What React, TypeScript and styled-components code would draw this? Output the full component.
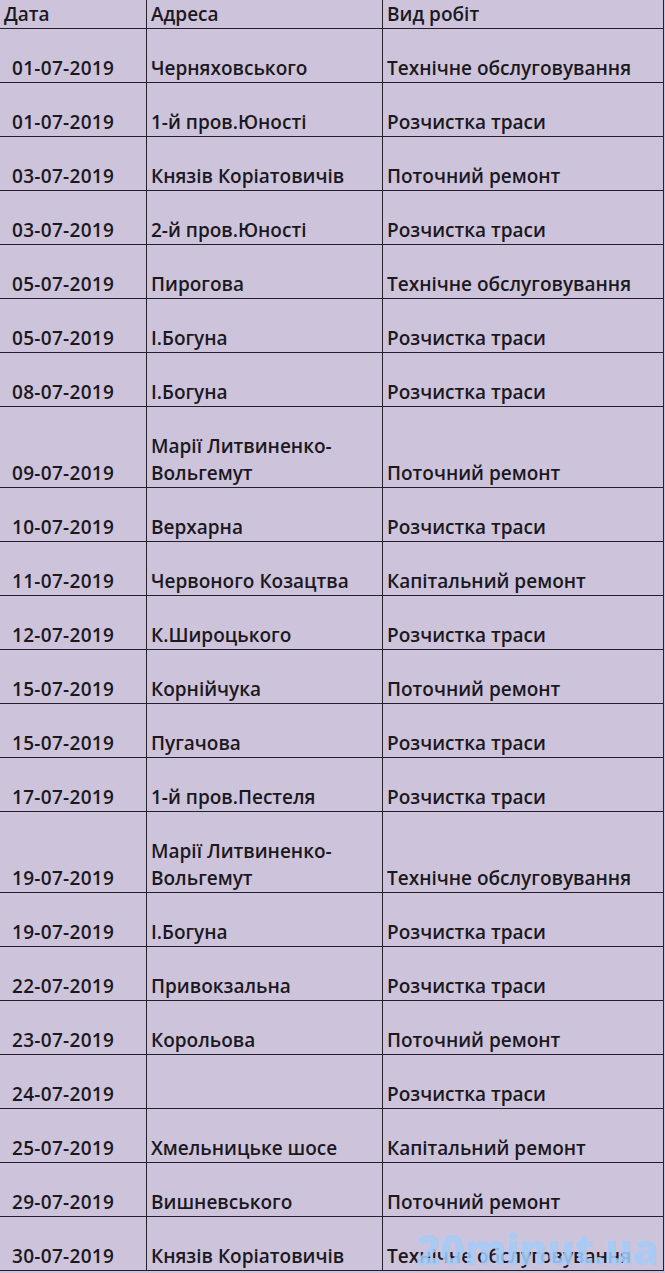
import React from 'react';
import styled, { createGlobalStyle } from 'styled-components';

type Row = {
  date: string;
  address: string;
  work: string;
  tall?: boolean;
};

const rows: Row[] = [
  { date: '01-07-2019', address: 'Черняховського', work: 'Технічне обслуговування' },
  { date: '01-07-2019', address: '1-й пров.Юності', work: 'Розчистка траси' },
  { date: '03-07-2019', address: 'Князів Коріатовичів', work: 'Поточний ремонт' },
  { date: '03-07-2019', address: '2-й пров.Юності', work: 'Розчистка траси' },
  { date: '05-07-2019', address: 'Пирогова', work: 'Технічне обслуговування' },
  { date: '05-07-2019', address: 'І.Богуна', work: 'Розчистка траси' },
  { date: '08-07-2019', address: 'І.Богуна', work: 'Розчистка траси' },
  { date: '09-07-2019', address: 'Марії Литвиненко-Вольгемут', work: 'Поточний ремонт', tall: true },
  { date: '10-07-2019', address: 'Верхарна', work: 'Розчистка траси' },
  { date: '11-07-2019', address: 'Червоного Козацтва', work: 'Капітальний ремонт' },
  { date: '12-07-2019', address: 'К.Широцького', work: 'Розчистка траси' },
  { date: '15-07-2019', address: 'Корнійчука', work: 'Поточний ремонт' },
  { date: '15-07-2019', address: 'Пугачова', work: 'Розчистка траси' },
  { date: '17-07-2019', address: '1-й пров.Пестеля', work: 'Розчистка траси' },
  { date: '19-07-2019', address: 'Марії Литвиненко-Вольгемут', work: 'Технічне обслуговування', tall: true },
  { date: '19-07-2019', address: 'І.Богуна', work: 'Розчистка траси' },
  { date: '22-07-2019', address: 'Привокзальна', work: 'Розчистка траси' },
  { date: '23-07-2019', address: 'Корольова', work: 'Поточний ремонт' },
  { date: '24-07-2019', address: '', work: 'Розчистка траси' },
  { date: '25-07-2019', address: 'Хмельницьке шосе', work: 'Капітальний ремонт' },
  { date: '29-07-2019', address: 'Вишневського', work: 'Поточний ремонт' },
  { date: '30-07-2019', address: 'Князів Коріатовичів', work: 'Технічне обслуговування' },
];

const GlobalStyle = createGlobalStyle`
  html, body {
    margin: 0;
    padding: 0;
    background: #cdc4dc;
  }
  body {
    font-family: 'Open Sans', 'Noto Sans', sans-serif;
    color: #1b1820;
  }
`;

const Page = styled.div`
  position: relative;
  width: 665px;
  height: 1273px;
  overflow: hidden;
  background: #cdc4dc;
`;

const Table = styled.table`
  border-collapse: collapse;
  table-layout: fixed;
  width: 664px;
  font-size: 19px;
  font-weight: 600;
  line-height: 27px;
`;

const HeadCell = styled.th<{ $w?: number }>`
  width: ${({ $w }) => ($w ? `${$w}px` : 'auto')};
  height: 28px;
  padding: 0 0 0 4px;
  text-align: left;
  vertical-align: bottom;
  font-weight: 600;
  border-bottom: 1px solid #24202c;
  border-left: 1px solid #24202c;
  &:first-child {
    border-left: none;
  }
  &:last-child {
    border-right: 1.5px solid #24202c;
  }
`;

const Cell = styled.td<{ $tall?: boolean; $date?: boolean }>`
  height: ${({ $tall }) => ($tall ? 80 : 53)}px;
  padding: 0 0 0 ${({ $date }) => ($date ? 12 : 4)}px;
  vertical-align: bottom;
  border-bottom: 1px solid #24202c;
  border-left: 1px solid #24202c;
  letter-spacing: ${({ $date }) => ($date ? '0.3px' : '0')};
  &:first-child {
    border-left: none;
  }
  &:last-child {
    border-right: 1.5px solid #24202c;
  }
`;

const Watermark = styled.div`
  position: absolute;
  left: 416px;
  top: 1228px;
  font-family: 'Open Sans', sans-serif;
  font-size: 42px;
  line-height: 42px;
  font-weight: 800;
  letter-spacing: -0.5px;
  color: rgba(165, 203, 248, 0.9);
  pointer-events: none;
  white-space: nowrap;
`;

export default function App() {
  return (
    <Page>
      <GlobalStyle />
      <Table>
        <thead>
          <tr>
            <HeadCell $w={142}>Дата</HeadCell>
            <HeadCell $w={231}>Адреса</HeadCell>
            <HeadCell>Вид робіт</HeadCell>
          </tr>
        </thead>
        <tbody>
          {rows.map((row, i) => (
            <tr key={i}>
              <Cell $tall={row.tall} $date>
                {row.date}
              </Cell>
              <Cell $tall={row.tall}>{row.address}</Cell>
              <Cell $tall={row.tall}>{row.work}</Cell>
            </tr>
          ))}
        </tbody>
      </Table>
      <Watermark>20minut.ua</Watermark>
    </Page>
  );
}
